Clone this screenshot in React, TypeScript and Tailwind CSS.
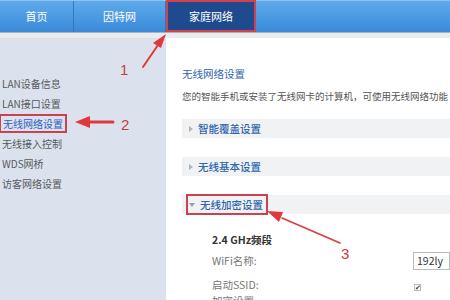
import React from "react";

const tabs = ["首页", "因特网", "家庭网络"];
const menu = ["LAN设备信息", "LAN接口设置", "无线网络设置", "无线接入控制", "WDS网桥", "访客网络设置"];

const SectionBar: React.FC<{ title: string; open?: boolean; marked?: boolean }> = ({ title, open, marked }) => (
  <div className="h-[19px] bg-[#f1f2f3] flex items-center pl-[4px]">
    <div
      className={`flex items-center gap-[5px] h-[21px] pr-[3px] pl-[1px] ${
        marked ? "border-2 border-[#c8424f]" : "border-2 border-transparent"
      }`}
    >
      {open ? (
        <span className="w-0 h-0 border-l-[3px] border-r-[3px] border-t-[4px] border-l-transparent border-r-transparent border-t-[#9aa0a8]" />
      ) : (
        <span className="w-0 h-0 border-t-[3px] border-b-[3px] border-l-[4px] border-t-transparent border-b-transparent border-l-[#b0b5bc]" />
      )}
      <span className="text-[10.5px] text-[#2f66ad] font-medium">{title}</span>
    </div>
  </div>
);

export default function App() {
  return (
    <div
      className="relative w-[450px] h-[300px] overflow-hidden bg-white flex flex-col"
      style={{ fontFamily: '"Noto Sans CJK SC", "Liberation Sans", sans-serif' }}
    >
      {/* top navigation */}
      <div className="h-[32px] shrink-0 flex bg-gradient-to-b from-[#5eaaeb] to-[#3a8ad8] border-t border-[#8cc3f0]">
        <div className="w-[74px] flex items-center justify-center text-[11px] text-white border-r border-[#3478bf]">
          {tabs[0]}
        </div>
        <div className="w-[92px] flex items-center justify-center text-[11px] text-white border-r border-[#3478bf]">
          {tabs[1]}
        </div>
        <div className="w-[90px] flex items-center justify-center text-[11px] text-white bg-[#1f4b8e] border-2 border-[#d1424f] -mt-px">
          {tabs[2]}
        </div>
      </div>
      <div className="h-px shrink-0 bg-[#a9b2bb]" />
      <div className="h-[5px] shrink-0 bg-[#e9ebed]" />

      <div className="flex flex-1 min-h-0">
        {/* sidebar */}
        <div className="w-[166px] shrink-0 bg-[#dce2ed] pt-[35px] flex flex-col">
          {menu.map((m, i) => (
            <div key={m} className="h-[20px] flex items-center">
              <span
                className={`text-[10px] leading-[15px] pl-[2px] pr-[2px] ${
                  i === 2 ? "text-[#2f5fc4] border-2 border-[#c8424f] -ml-px" : "text-[#555a60]"
                }`}
              >
                {m}
              </span>
            </div>
          ))}
        </div>

        {/* main content */}
        <div className="flex-1 min-w-0 pl-[16px] pt-[28px] flex flex-col">
          <div className="text-[10.5px] leading-[16px] text-[#2f66ad] whitespace-nowrap">无线网络设置</div>
          <div className="mt-[6px] text-[9.5px] leading-[16px] text-[#555] whitespace-nowrap">
            您的智能手机或安装了无线网卡的计算机，可使用无线网络功能
          </div>
          <div className="mt-[15px] flex flex-col gap-[19px]">
            <SectionBar title="智能覆盖设置" />
            <SectionBar title="无线基本设置" />
            <SectionBar title="无线加密设置" open marked />
          </div>
          <div className="pl-[30px] mt-[18px] flex flex-col">
            <div className="text-[10.5px] leading-[16px] font-bold text-[#333] whitespace-nowrap">2.4 GHz频段</div>
            <div className="flex items-center mt-[3px] h-[19px]">
              <span className="w-[201px] text-[10.5px] text-[#777]">WiFi名称:</span>
              <div className="h-[18px] flex-1 border border-[#b8bcc2] text-[10.5px] leading-[16px] text-[#333] pl-[3px]">192ly</div>
            </div>
            <div className="flex items-center mt-[5px] h-[19px]">
              <span className="w-[202px] text-[10.5px] text-[#777]">启动SSID:</span>
              <span className="w-[7px] h-[7px] mt-[6px] border border-[#bbb] flex items-center justify-center text-[7px] leading-none text-[#444]">✔</span>
            </div>
            <div className="text-[10.5px] leading-[14px] text-[#777] whitespace-nowrap">加密设置</div>
          </div>
        </div>
      </div>

      {/* annotation arrows */}
      <svg className="absolute inset-0 pointer-events-none" width="450" height="300" viewBox="0 0 450 300">
        <g stroke="#e0393d" fill="#e0393d" strokeLinecap="round">
          <line x1="143" y1="67" x2="158" y2="45" strokeWidth="2" />
          <polygon points="166,34 153,43 161,48" stroke="none" />
          <line x1="113" y1="122" x2="88" y2="122" strokeWidth="3" />
          <polygon points="75,122 90,116 90,128" stroke="none" />
          <line x1="340" y1="243" x2="282" y2="218" strokeWidth="1.6" />
          <polygon points="267,211 283,212 279,222" stroke="none" />
        </g>
        <g fill="#c2413f" fontSize="15" fontFamily="Liberation Sans, sans-serif">
          <text x="120" y="75">1</text>
          <text x="121" y="130">2</text>
          <text x="341" y="259">3</text>
        </g>
      </svg>
    </div>
  );
}
